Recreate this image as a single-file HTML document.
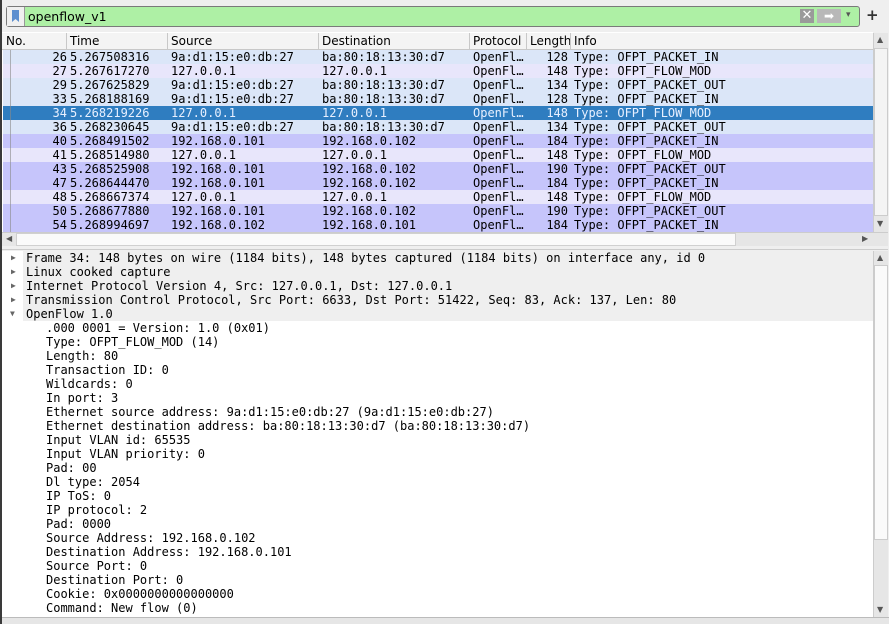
<!DOCTYPE html>
<html><head><style>
*{margin:0;padding:0;box-sizing:border-box}
body{width:889px;height:624px;overflow:hidden;background:#efefef;position:relative;font-family:"DejaVu Sans","Liberation Sans",sans-serif;font-size:12px;color:#000}
.abs{position:absolute}
.mono{font-family:"DejaVu Sans Mono","Liberation Mono",monospace;font-size:12px}
.row{position:absolute;left:3px;width:870px;height:14px;line-height:14px;white-space:pre}
.row span{position:absolute;top:0}
.c0{right:806px;text-align:right}
.c1{left:67px}.c2{left:168px}.c3{left:319px}.c4{left:470px}.c5{right:305px}.c6{left:571px}
.b{background:#dbe6f8}.f{background:#e8e6fb}.p{background:#c6c5fb}.s{background:#2f7dc0;color:#e8f0ff}
.d{position:absolute;left:3px;width:870px;height:14px;line-height:14px;white-space:pre}
.hd{position:absolute;top:33px;height:17px;line-height:17px;border-right:1px solid #c8c8c8;padding-left:3px;font-size:12px}
</style></head><body>
<div class="abs" style="left:0;top:0;width:2px;height:624px;background:#3a3a3a"></div>
<div class="abs" style="left:6px;top:6px;width:854px;height:21px;background:#aef0a5;border:1px solid #7a7a7a;border-radius:3px"></div>
<div class="abs" style="left:7px;top:7px;width:18px;height:19px;background:#f0f0f0;border-right:1px solid #999"></div>
<div class="abs" style="left:12px;top:10px;width:7px;height:12px;background:#5d8fcf;clip-path:polygon(0 0,100% 0,100% 100%,50% 75%,0 100%)"></div>
<div class="abs" style="left:28px;top:8px;line-height:17px;font-size:12.5px">openflow_v1</div>
<div class="abs" style="left:800px;top:9px;width:14px;height:14px;background:#9a9a9a;color:#fff;font-size:13px;line-height:14px;text-align:center">✕</div>
<div class="abs" style="left:817px;top:9px;width:24px;height:14px;background:#b8b8b8;color:#fff;font-size:12px;line-height:14px;text-align:center">➡</div>
<div class="abs" style="left:846px;top:10px;font-size:9px;color:#555">▾</div>
<div class="abs" style="left:866px;top:6px;font-size:15px;font-weight:bold;color:#333">+</div>
<div class="abs" style="left:2px;top:32px;width:871px;height:200px;background:#fff"></div>
<div class="abs" style="left:2px;top:33px;width:871px;height:17px;background:#f4f4f4;border-bottom:1px solid #c8c8c8"></div>
<div class="hd" style="left:3px;width:64px">No.</div>
<div class="hd" style="left:67px;width:101px">Time</div>
<div class="hd" style="left:168px;width:151px">Source</div>
<div class="hd" style="left:319px;width:151px">Destination</div>
<div class="hd" style="left:470px;width:57px">Protocol</div>
<div class="hd" style="left:527px;width:44px;overflow:hidden;white-space:nowrap">Length</div>
<div class="hd" style="left:571px;border:none">Info</div>
<div class="mono">
<div class="row b" style="top:50px"><span class="c0">26</span><span class="c1">5.267508316</span><span class="c2">9a:d1:15:e0:db:27</span><span class="c3">ba:80:18:13:30:d7</span><span class="c4">OpenFl…</span><span class="c5">128</span><span class="c6">Type: OFPT_PACKET_IN</span></div>
<div class="row f" style="top:64px"><span class="c0">27</span><span class="c1">5.267617270</span><span class="c2">127.0.0.1</span><span class="c3">127.0.0.1</span><span class="c4">OpenFl…</span><span class="c5">148</span><span class="c6">Type: OFPT_FLOW_MOD</span></div>
<div class="row b" style="top:78px"><span class="c0">29</span><span class="c1">5.267625829</span><span class="c2">9a:d1:15:e0:db:27</span><span class="c3">ba:80:18:13:30:d7</span><span class="c4">OpenFl…</span><span class="c5">134</span><span class="c6">Type: OFPT_PACKET_OUT</span></div>
<div class="row b" style="top:92px"><span class="c0">33</span><span class="c1">5.268188169</span><span class="c2">9a:d1:15:e0:db:27</span><span class="c3">ba:80:18:13:30:d7</span><span class="c4">OpenFl…</span><span class="c5">128</span><span class="c6">Type: OFPT_PACKET_IN</span></div>
<div class="row s" style="top:106px"><span class="c0">34</span><span class="c1">5.268219226</span><span class="c2">127.0.0.1</span><span class="c3">127.0.0.1</span><span class="c4">OpenFl…</span><span class="c5">148</span><span class="c6">Type: OFPT_FLOW_MOD</span></div>
<div class="row b" style="top:120px"><span class="c0">36</span><span class="c1">5.268230645</span><span class="c2">9a:d1:15:e0:db:27</span><span class="c3">ba:80:18:13:30:d7</span><span class="c4">OpenFl…</span><span class="c5">134</span><span class="c6">Type: OFPT_PACKET_OUT</span></div>
<div class="row p" style="top:134px"><span class="c0">40</span><span class="c1">5.268491502</span><span class="c2">192.168.0.101</span><span class="c3">192.168.0.102</span><span class="c4">OpenFl…</span><span class="c5">184</span><span class="c6">Type: OFPT_PACKET_IN</span></div>
<div class="row f" style="top:148px"><span class="c0">41</span><span class="c1">5.268514980</span><span class="c2">127.0.0.1</span><span class="c3">127.0.0.1</span><span class="c4">OpenFl…</span><span class="c5">148</span><span class="c6">Type: OFPT_FLOW_MOD</span></div>
<div class="row p" style="top:162px"><span class="c0">43</span><span class="c1">5.268525908</span><span class="c2">192.168.0.101</span><span class="c3">192.168.0.102</span><span class="c4">OpenFl…</span><span class="c5">190</span><span class="c6">Type: OFPT_PACKET_OUT</span></div>
<div class="row p" style="top:176px"><span class="c0">47</span><span class="c1">5.268644470</span><span class="c2">192.168.0.101</span><span class="c3">192.168.0.102</span><span class="c4">OpenFl…</span><span class="c5">184</span><span class="c6">Type: OFPT_PACKET_IN</span></div>
<div class="row f" style="top:190px"><span class="c0">48</span><span class="c1">5.268667374</span><span class="c2">127.0.0.1</span><span class="c3">127.0.0.1</span><span class="c4">OpenFl…</span><span class="c5">148</span><span class="c6">Type: OFPT_FLOW_MOD</span></div>
<div class="row p" style="top:204px"><span class="c0">50</span><span class="c1">5.268677880</span><span class="c2">192.168.0.101</span><span class="c3">192.168.0.102</span><span class="c4">OpenFl…</span><span class="c5">190</span><span class="c6">Type: OFPT_PACKET_OUT</span></div>
<div class="row p" style="top:218px"><span class="c0">54</span><span class="c1">5.268994697</span><span class="c2">192.168.0.102</span><span class="c3">192.168.0.101</span><span class="c4">OpenFl…</span><span class="c5">184</span><span class="c6">Type: OFPT_PACKET_IN</span></div>
</div>
<div class="abs" style="left:10px;top:50px;width:1px;height:182px;background:#888;opacity:.6"></div>
<div class="abs" style="left:873px;top:33px;width:15px;height:199px;background:#e6e6e6;border-left:1px solid #ccc"></div>
<div class="abs" style="left:874px;top:48px;width:14px;height:168px;background:#f4f4f4;border:1px solid #ccc"></div>
<div class="abs" style="left:877px;top:35px;font-size:8px;color:#555">▲</div>
<div class="abs" style="left:877px;top:219px;font-size:8px;color:#555">▼</div>
<div class="abs" style="left:2px;top:232px;width:886px;height:14px;background:#e6e6e6;border-top:1px solid #ccc"></div>
<div class="abs" style="left:16px;top:233px;width:720px;height:13px;background:#fafafa;border:1px solid #d0d0d0"></div>
<div class="abs" style="left:6px;top:234px;font-size:8px;color:#555">◀</div>
<div class="abs" style="left:862px;top:234px;font-size:8px;color:#555">▶</div>
<div class="abs" style="left:2px;top:246px;width:886px;height:4px;background:#efefef;border-bottom:1px solid #ccc"></div>
<div class="abs" style="left:2px;top:251px;width:871px;height:366px;background:#fff"></div>
<div class="mono">
<div class="d" style="top:251px;background:linear-gradient(90deg,#fff 20px,#efefef 20px)"><span class="abs" style="left:8px;font-size:8px;color:#666">▶</span><span class="abs" style="left:23px">Frame 34: 148 bytes on wire (1184 bits), 148 bytes captured (1184 bits) on interface any, id 0</span></div>
<div class="d" style="top:265px;background:linear-gradient(90deg,#fff 20px,#efefef 20px)"><span class="abs" style="left:8px;font-size:8px;color:#666">▶</span><span class="abs" style="left:23px">Linux cooked capture</span></div>
<div class="d" style="top:279px;background:linear-gradient(90deg,#fff 20px,#efefef 20px)"><span class="abs" style="left:8px;font-size:8px;color:#666">▶</span><span class="abs" style="left:23px">Internet Protocol Version 4, Src: 127.0.0.1, Dst: 127.0.0.1</span></div>
<div class="d" style="top:293px;background:linear-gradient(90deg,#fff 20px,#efefef 20px)"><span class="abs" style="left:8px;font-size:8px;color:#666">▶</span><span class="abs" style="left:23px">Transmission Control Protocol, Src Port: 6633, Dst Port: 51422, Seq: 83, Ack: 137, Len: 80</span></div>
<div class="d" style="top:307px;background:linear-gradient(90deg,#fff 20px,#efefef 20px)"><span class="abs" style="left:7px;font-size:8px;color:#666">▼</span><span class="abs" style="left:23px">OpenFlow 1.0</span></div>
<div class="d" style="top:321px"><span class="abs" style="left:43px">.000 0001 = Version: 1.0 (0x01)</span></div>
<div class="d" style="top:335px"><span class="abs" style="left:43px">Type: OFPT_FLOW_MOD (14)</span></div>
<div class="d" style="top:349px"><span class="abs" style="left:43px">Length: 80</span></div>
<div class="d" style="top:363px"><span class="abs" style="left:43px">Transaction ID: 0</span></div>
<div class="d" style="top:377px"><span class="abs" style="left:43px">Wildcards: 0</span></div>
<div class="d" style="top:391px"><span class="abs" style="left:43px">In port: 3</span></div>
<div class="d" style="top:405px"><span class="abs" style="left:43px">Ethernet source address: 9a:d1:15:e0:db:27 (9a:d1:15:e0:db:27)</span></div>
<div class="d" style="top:419px"><span class="abs" style="left:43px">Ethernet destination address: ba:80:18:13:30:d7 (ba:80:18:13:30:d7)</span></div>
<div class="d" style="top:433px"><span class="abs" style="left:43px">Input VLAN id: 65535</span></div>
<div class="d" style="top:447px"><span class="abs" style="left:43px">Input VLAN priority: 0</span></div>
<div class="d" style="top:461px"><span class="abs" style="left:43px">Pad: 00</span></div>
<div class="d" style="top:475px"><span class="abs" style="left:43px">Dl type: 2054</span></div>
<div class="d" style="top:489px"><span class="abs" style="left:43px">IP ToS: 0</span></div>
<div class="d" style="top:503px"><span class="abs" style="left:43px">IP protocol: 2</span></div>
<div class="d" style="top:517px"><span class="abs" style="left:43px">Pad: 0000</span></div>
<div class="d" style="top:531px"><span class="abs" style="left:43px">Source Address: 192.168.0.102</span></div>
<div class="d" style="top:545px"><span class="abs" style="left:43px">Destination Address: 192.168.0.101</span></div>
<div class="d" style="top:559px"><span class="abs" style="left:43px">Source Port: 0</span></div>
<div class="d" style="top:573px"><span class="abs" style="left:43px">Destination Port: 0</span></div>
<div class="d" style="top:587px"><span class="abs" style="left:43px">Cookie: 0x0000000000000000</span></div>
<div class="d" style="top:601px"><span class="abs" style="left:43px">Command: New flow (0)</span></div>
</div>
<div class="abs" style="left:873px;top:251px;width:15px;height:366px;background:#e6e6e6;border-left:1px solid #ccc"></div>
<div class="abs" style="left:874px;top:265px;width:14px;height:275px;background:#fafafa;border:1px solid #ccc"></div>
<div class="abs" style="left:877px;top:253px;font-size:8px;color:#555">▲</div>
<div class="abs" style="left:877px;top:605px;font-size:8px;color:#555">▼</div>
<div class="abs" style="left:2px;top:617px;width:887px;height:7px;background:#e6e6e6;border-top:1px solid #bbb"></div>
</body></html>
